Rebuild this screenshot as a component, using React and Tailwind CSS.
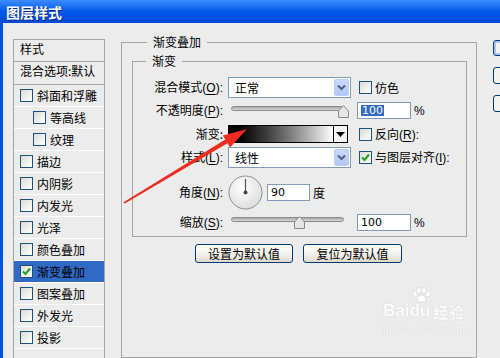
import React from 'react'

const Box = ({ checked }) => (
  <span className="w-[13px] h-[13px] border border-[#1c5180] bg-gradient-to-br from-[#dcdcd5] to-white flex items-center justify-center shrink-0">
    {checked && (
      <svg width="9" height="9" viewBox="0 0 9 9">
        <path d="M1 4.5 L3.5 7 L8 1.5" stroke="#21a121" strokeWidth="2" fill="none" />
      </svg>
    )}
  </span>
)

const Key = ({ k }) => (
  <span className="font-['Liberation_Sans',sans-serif]">
    (<span className="underline underline-offset-2">{k}</span>):
  </span>
)

const Label = ({ children }) => (
  <div className="w-[90px] mr-[5px] shrink-0 text-right whitespace-nowrap">{children}</div>
)

const Select = ({ value }) => (
  <div className="w-[123px] h-[21px] shrink-0 border border-[#7f9db9] bg-white flex items-center pl-[6px] relative">
    <span>{value}</span>
    <div className="ml-auto mr-[1px] w-[15px] h-[17px] rounded-[2px] border border-[#b9cdf8] bg-gradient-to-b from-[#c9dafc] to-[#b2c7f5] flex items-center justify-center">
      <svg width="9" height="7" viewBox="0 0 9 7">
        <path d="M1 1.5 L4.5 5 L8 1.5" stroke="#4d6185" strokeWidth="2" fill="none" />
      </svg>
    </div>
  </div>
)

const Thumb = () => (
  <svg width="11" height="13" viewBox="0 0 11 13">
    <path d="M5.5 0.5 L10.5 6 L10.5 12.5 L0.5 12.5 L0.5 6 Z" fill="#e6e6e6" stroke="#8a8a8a" />
  </svg>
)

const Slider = ({ pos, trackTop, thumbTop }) => (
  <div className="w-[123px] h-full shrink-0 relative">
    <div
      className="absolute left-[3px] w-[113px] h-[5px] rounded-full border border-[#8c8c8c] bg-gradient-to-b from-[#a8a8a8] to-[#d8d8d8]"
      style={{ top: trackTop }}
    />
    <div className="absolute" style={{ left: pos, top: thumbTop }}>
      <Thumb />
    </div>
  </div>
)

const Field = ({ value, selected, w = 'w-[54px]' }) => (
  <div className={`${w} h-[17px] border border-[#7f9db9] bg-white flex items-center pl-[3px] text-[11px] font-['DejaVu_Sans',sans-serif]`}>
    <span className={selected ? 'bg-[#316ac5] text-white px-[1px]' : ''}>{value}</span>
  </div>
)

const items = [
  { t: '斜面和浮雕' },
  { t: '等高线', sub: true },
  { t: '纹理', sub: true },
  { t: '描边' },
  { t: '内阴影' },
  { t: '内发光' },
  { t: '光泽' },
  { t: '颜色叠加' },
  { t: '渐变叠加', on: true },
  { t: '图案叠加' },
  { t: '外发光' },
  { t: '投影' },
]

const XpButton = ({ children, w }) => (
  <div className={`${w} h-[19px] rounded-[3px] border border-[#003c74] bg-gradient-to-b from-white via-[#f4f3ee] to-[#dcd9cc] flex items-center justify-center`}>
    {children}
  </div>
)

export default function App() {
  return (
    <div className="w-[500px] h-[358px] overflow-hidden bg-[#ececec] relative flex flex-col text-[12px] leading-none text-black font-['Noto_Sans_CJK_SC',sans-serif]">
      <div className="h-[23px] shrink-0 bg-gradient-to-b from-[#3a8cff] via-[#0058e8] to-[#0049d6] flex items-center pl-[6px]">
        <span className="text-white font-bold text-[14px] [text-shadow:1px_1px_0_#0a2a80]">图层样式</span>
      </div>

      <div className="flex flex-1 min-h-0">
        <div className="w-[3px] shrink-0 bg-[#0054e3]" />

        {/* style list */}
        <div className="ml-[10px] mt-[16px] w-[92px] shrink-0 border-x border-t border-[#a5a5a5] flex flex-col">
          <div className="h-[22px] border-b border-[#a5a5a5] pl-[6px] pt-[3px]">样式</div>
          <div className="h-[23px] border-b border-[#a5a5a5] pl-[6px] pt-[3px] whitespace-nowrap">混合选项:默认</div>
          {items.map((it) => (
            <div
              key={it.t}
              className={`h-[22px] border-b border-white flex items-center gap-[3px] ${it.sub ? 'pl-[19px]' : 'pl-[6px]'} ${it.on ? 'bg-[#316ac5]' : ''}`}
            >
              <Box checked={it.on} />
              <span className="ml-[1px]">{it.t}</span>
            </div>
          ))}
        </div>

        {/* main panel */}
        <div className="ml-[16px] mt-[11px] w-[356px] shrink-0 flex flex-col">
          <fieldset className="border border-[#a5a5a5] pl-[10px] pr-[9px] pt-[3px] h-[420px]">
            <legend className="ml-[15px] px-[6px] leading-[16px]">渐变叠加</legend>

            <fieldset className="border border-[#a5a5a5] pb-[5px]">
              <legend className="ml-[13px] px-[6px] leading-[16px]">渐变</legend>

              <div className="mt-[8px] h-[21px] flex items-center">
                <Label>混合模式<Key k="O" /></Label>
                <Select value="正常" />
                <div className="ml-[8px] flex items-center gap-[3px]">
                  <Box />
                  <span>仿色</span>
                </div>
              </div>

              <div className="mt-[4px] h-[17px] flex items-center">
                <Label>不透明度<Key k="P" /></Label>
                <Slider pos={110} trackTop={4} thumbTop={3} />
                <div className="ml-[6px]"><Field value="100" selected /></div>
                <span className="ml-[3px] font-['Liberation_Sans',sans-serif]">%</span>
              </div>

              <div className="mt-[6px] h-[18px] flex items-center">
                <Label>渐变:</Label>
                <div className="w-[120px] h-[18px] shrink-0 border border-black flex">
                  <div className="flex-1 bg-gradient-to-r from-black to-white" />
                  <div className="w-[14px] border-l border-black bg-[#f4f4f4] flex items-center justify-center">
                    <svg width="9" height="5" viewBox="0 0 9 5">
                      <path d="M0 0 L9 0 L4.5 5 Z" fill="#000" />
                    </svg>
                  </div>
                </div>
                <div className="ml-[11px] flex items-center gap-[3px]">
                  <Box />
                  <span>反向<Key k="R" /></span>
                </div>
              </div>

              <div className="mt-[4px] h-[21px] flex items-center">
                <Label>样式<Key k="L" /></Label>
                <Select value="线性" />
                <div className="ml-[8px] flex items-center gap-[3px]">
                  <Box checked />
                  <span>与图层对齐<Key k="I" /></span>
                </div>
              </div>

              <div className="mt-[7px] h-[35px] flex items-center">
                <Label>角度<Key k="N" /></Label>
                <svg width="35" height="35" viewBox="0 0 35 35">
                  <defs>
                    <radialGradient id="dial" cx="40%" cy="35%" r="70%">
                      <stop offset="0%" stopColor="#ffffff" />
                      <stop offset="100%" stopColor="#dcdcdc" />
                    </radialGradient>
                  </defs>
                  <circle cx="17.5" cy="17.5" r="16.5" fill="url(#dial)" stroke="#8e8e8e" />
                  <line x1="17.5" y1="17.5" x2="17.5" y2="4" stroke="#555" strokeWidth="1.2" />
                  <circle cx="17.5" cy="17.5" r="2" fill="#444" />
                </svg>
                <div className="ml-[4px]"><Field value="90" w="w-[43px]" /></div>
                <span className="ml-[3px]">度</span>
              </div>

              <div className="mt-[4px] h-[17px] flex items-center">
                <Label>缩放<Key k="S" /></Label>
                <Slider pos={66} trackTop={3} thumbTop={2} />
                <div className="ml-[6px]"><Field value="100" /></div>
                <span className="ml-[3px] font-['Liberation_Sans',sans-serif]">%</span>
              </div>
            </fieldset>

            <div className="mt-[7px] ml-[63px] flex gap-[10px]">
              <XpButton w="w-[98px]">设置为默认值</XpButton>
              <XpButton w="w-[99px]">复位为默认值</XpButton>
            </div>
          </fieldset>
        </div>

        {/* right buttons */}
        <div className="ml-[16px] mt-[17px] shrink-0 flex flex-col gap-[11px]">
          <div className="w-[24px] h-[16px] rounded-[3px] border border-[#003c74] bg-[#f4f3ee] shadow-[inset_0_0_0_2px_#a8c6f5]" />
          <div className="w-[24px] h-[17px] rounded-[3px] border border-[#003c74] bg-[#f4f3ee]" />
          <div className="w-[24px] h-[17px] rounded-[3px] border border-[#003c74] bg-[#f4f3ee]" />
        </div>
      </div>

      {/* watermark */}
      <div className="absolute left-[383px] top-[302px] flex flex-col items-start text-white [text-shadow:0_0_1px_#bdbdbd] opacity-90 pointer-events-none">
        <div className="flex items-end font-['Liberation_Sans',sans-serif] font-bold text-[17px] leading-none">
          <span>Bai</span>
          <span className="relative mr-[3px]">
            du
            <svg className="absolute left-[2px] -top-[15px]" width="20" height="16" viewBox="0 0 20 16">
              <g fill="#fff" stroke="#cfcfcf" strokeWidth="0.6">
                <ellipse cx="4" cy="7" rx="2.4" ry="3" />
                <ellipse cx="8" cy="3.5" rx="2.4" ry="3" />
                <ellipse cx="13" cy="3.5" rx="2.4" ry="3" />
                <ellipse cx="17" cy="7" rx="2.4" ry="3" />
                <path d="M10.5 8 C14 8 16 13 14 15 L7 15 C5 13 7 8 10.5 8 Z" />
              </g>
            </svg>
          </span>
          <span className="font-['Noto_Sans_CJK_SC',sans-serif] text-[15px]">经验</span>
        </div>
        <div className="mt-[4px] font-['Liberation_Serif',serif] text-[11px]">jingyan.baidu.com</div>
      </div>

      {/* red arrow */}
      <svg className="absolute left-0 top-0 pointer-events-none" width="500" height="358" viewBox="0 0 500 358">
        <polygon
          points="123.6,202.3 225.3,139.5 222.8,135.4 247,129 230,147.4 227.5,143.3 124.4,203.7"
          fill="#ee2b1f"
        />
      </svg>
    </div>
  )
}
